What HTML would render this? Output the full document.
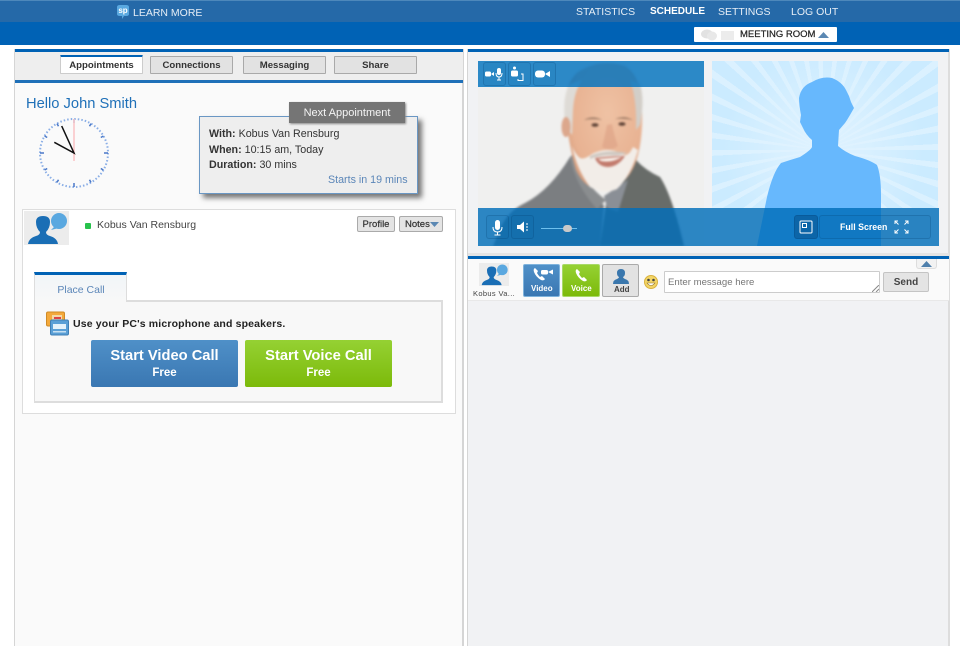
<!DOCTYPE html>
<html><head><meta charset="utf-8">
<style>
html,body{margin:0;padding:0;background:#fff}
body{position:relative;width:960px;height:646px;overflow:hidden;font-family:"Liberation Sans",Arial,sans-serif;color:#333}
.a{position:absolute;box-sizing:border-box}
.t{position:absolute;white-space:nowrap}
.nav{top:5px;font-size:10.500px;line-height:14px;color:#e6eef6}
.tab{position:absolute;box-sizing:border-box;top:56px;height:18px;background:#e2e2e2;border:1px solid #a9a9a9;border-radius:1px;font-size:9.600px;font-weight:bold;line-height:17px;text-align:center;color:#333}
.ib{position:absolute;box-sizing:border-box;background:rgba(0,70,130,.05);border:1px solid rgba(0,60,110,.22);border-radius:3px}
.b{font-weight:bold}
.btn{position:absolute;border-radius:2px;color:#fff;text-align:center;font-weight:bold}
.sm{position:absolute;box-sizing:border-box;top:216px;height:16px;background:#e4e4e4;border:1px solid #aaa;border-radius:2px;font-size:9.500px;line-height:15px;text-align:center;color:#333;-webkit-text-stroke:.2px #333}
</style></head><body>

<!-- Top bars -->
<div class="a" style="left:0;top:0;width:960px;height:22px;background:#2569a8;border-top:1px solid #4d88bb"></div>
<div class="a" style="left:0;top:22px;width:960px;height:23px;background:#0062b5"></div>
<svg class="a" style="left:115px;top:4px" width="16" height="16" viewBox="0 0 16 16"><path d="M2 3q0-2 3-2h6q3 0 3 2v7q0 2-3 2H9l-2 3v-3H5q-3 0-3-2z" fill="#5aa9e0"/><text x="8" y="9" font-size="8" font-weight="bold" fill="#fff" text-anchor="middle" font-family="Liberation Sans">sp</text></svg>
<div class="t nav" style="left:133px;top:6px">LEARN MORE</div>
<div class="t nav" style="left:576px">STATISTICS</div>
<div class="t nav b" style="left:650px;font-size:10px;color:#fff">SCHEDULE</div>
<div class="t nav" style="left:718px">SETTINGS</div>
<div class="t nav" style="left:791px">LOG OUT</div>

<div class="a" style="left:694px;top:27px;width:143px;height:15px;background:#fff;border-radius:1px"></div>
<svg class="a" style="left:700px;top:28px" width="38" height="14"><ellipse cx="7" cy="6" rx="6" ry="4.500" fill="#e2e2e2"/><ellipse cx="12" cy="8" rx="5" ry="4.500" fill="#e8e8e8"/><rect x="21" y="3" width="13" height="9" fill="#ececec"/></svg>
<div class="t" style="left:740px;top:28px;font-size:9.500px;line-height:14px;color:#222;-webkit-text-stroke:.2px #222">MEETING ROOM</div>
<svg class="a" style="left:818px;top:31px" width="11" height="8"><path d="M0 7L5.500 1 11 7z" fill="#5b88b3"/></svg>

<!-- Left panel -->
<div class="a" style="left:14px;top:49px;width:450px;height:597px;background:#fafafa;border-left:1px solid #d5d5d5;border-right:2px solid #d5d5d5"></div>
<div class="a" style="left:15px;top:49px;width:448px;height:3px;background:#0062b5"></div>
<div class="a" style="left:15px;top:52px;width:448px;height:28px;background:#eee"></div>
<div class="a" style="left:15px;top:80px;width:448px;height:3px;background:#1f70b8"></div>

<div class="tab" style="left:60px;top:55px;width:83px;height:19px;background:#fff;border:1px solid #ccc;border-top:2px solid #0062b5">Appointments</div>
<div class="tab" style="left:150px;width:83px">Connections</div>
<div class="tab" style="left:243px;width:83px">Messaging</div>
<div class="tab" style="left:334px;width:83px">Share</div>

<div class="t" style="left:26px;top:95px;font-size:14.700px;line-height:18px;color:#1f70b8">Hello John Smith</div>

<!-- Clock -->
<svg class="a" style="left:30px;top:109px" width="88" height="88" viewBox="30 109 88 88">
<circle cx="74" cy="153" r="34" fill="none" stroke="#8aaee6" stroke-width="2" stroke-dasharray="1.500 2.060"/>
<g stroke="#4a78c8" stroke-width="1.500">
<path d="M74 119v4M74 187v-4M40 153h4M108 153h-4"/>
<path d="M91 123.600l-1.500 2.600M103.400 136l-2.600 1.500M103.400 170l-2.600-1.500M91 182.400l-1.500-2.600M57 182.400l1.500-2.600M44.600 170l2.600-1.500M44.600 136l2.600 1.500M57 123.600l1.500 2.600"/>
</g>
<path d="M74 119V161" stroke="#fbc6c8" stroke-width="1.600"/>
<path d="M54.300 142.300L74 153L61.700 126" stroke="#111" stroke-width="1.500" fill="none"/>
</svg>

<!-- Appointment box -->
<div class="a" style="left:199px;top:116px;width:219px;height:78px;background:#eee;border:1px solid #6a97c4;box-shadow:4px 4px 5px #777"></div>
<div class="t" style="left:209px;top:127px;font-size:10.700px;line-height:15.500px;color:#333"><span class="b">With:</span> Kobus Van Rensburg<br><span class="b">When:</span> 10:15 am, Today<br><span class="b">Duration:</span> 30 mins</div>
<div class="t" style="left:328px;top:173px;font-size:10.700px;line-height:15px;color:#5b86b8">Starts in 19 mins</div>
<div class="a" style="left:289px;top:102px;width:116px;height:21px;background:#757575;box-shadow:1px 1px 2px #888;color:#f5f5f5;font-size:11px;line-height:23px;text-align:center">Next Appointment</div>

<!-- Contact card -->
<div class="a" style="left:22px;top:209px;width:434px;height:205px;background:#fff;border:1px solid #ddd"></div>
<div class="a" style="left:24px;top:211px;width:45px;height:34px;background:#ececec"></div>
<svg class="a" style="left:24px;top:211px" width="45" height="34" viewBox="0 0 45 34">
<path d="M4 33Q5 27 12 25Q16 24 16 21Q12 17 12 11Q12 5 19 5Q26 5 26 11Q26 17 22 21Q22 24 26 25Q33 27 34 33z" fill="#1a6eb5"/>
<circle cx="35" cy="10" r="8" fill="#5aa8e0"/><path d="M31 15L27 19L35 17z" fill="#5aa8e0"/></svg>
<div class="a" style="left:85px;top:223px;width:6px;height:6px;background:#27c24c;border-radius:1px"></div>
<div class="t" style="left:97px;top:218px;font-size:10.500px;line-height:14px;color:#444">Kobus Van Rensburg</div>
<div class="sm" style="left:357px;width:38px">Profile</div>
<div class="sm" style="left:399px;width:44px;text-align:left;padding-left:5px">Notes</div>
<svg class="a" style="left:430px;top:222px" width="10" height="5"><path d="M0 0h9L4.500 5z" fill="#5b88b3"/></svg>

<!-- Place call -->
<div class="a" style="left:34px;top:300px;width:409px;height:103px;background:#f8f8f8;border:1px solid #ddd;border-width:2px 2px 2px 1px"></div>
<div class="a" style="left:34px;top:272px;width:93px;height:30px;background:linear-gradient(#f1f5f8,#f8f8f8);border-top:3px solid #0062b5;border-left:1px solid #ddd;border-right:1px solid #ddd;color:#5b86b8;font-size:10.500px;line-height:30px;text-align:center;padding-left:1px">Place Call</div>
<svg class="a" style="left:46px;top:311px" width="24" height="26"><rect x="0.500" y="1" width="18" height="14" rx="1.500" fill="#f4a93b" stroke="#d08a25"/><rect x="6" y="4" width="10" height="8" fill="#f3d9a8"/><rect x="8" y="6" width="7" height="2" fill="#d44"/><rect x="4.500" y="9" width="18" height="15" rx="1.500" fill="#5a9fd6" stroke="#3f7fb6"/><rect x="7" y="13" width="13" height="5" fill="#e4f1fa"/><rect x="7" y="20" width="13" height="1.500" fill="#c7e0f2"/></svg>
<div class="t b" style="left:73px;top:317px;font-size:10.500px;line-height:14px;color:#222;letter-spacing:.15px">Use your PC's microphone and speakers.</div>
<div class="btn" style="left:91px;top:340px;width:147px;height:47px;background:linear-gradient(#4f90c8,#3a77b2)"><div style="font-size:14.700px;line-height:17px;margin-top:8px">Start Video Call</div><div style="font-size:11.500px;line-height:16px;margin-top:0">Free</div></div>
<div class="btn" style="left:245px;top:340px;width:147px;height:47px;background:linear-gradient(#95d133,#7cba0a)"><div style="font-size:14.700px;line-height:17px;margin-top:8px">Start Voice Call</div><div style="font-size:11.500px;line-height:16px;margin-top:0">Free</div></div>

<!-- Right panel -->
<div class="a" style="left:467px;top:49px;width:483px;height:597px;background:#f1f2f4;border-left:1px solid #d5d5d5;border-right:2px solid #ddd"></div>
<div class="a" style="left:468px;top:49px;width:481px;height:3px;background:#0062b5"></div>
<div class="a" style="left:468px;top:253px;width:481px;height:3px;background:#e4e4e4"></div>

<!-- Photo -->
<svg class="a" style="left:478px;top:61px" width="226" height="185" viewBox="478 61 226 185">
<defs>
<radialGradient id="face" cx=".55" cy=".4" r=".62"><stop offset="0" stop-color="#efc2a4"/><stop offset=".75" stop-color="#e8b292"/><stop offset="1" stop-color="#d59c7c"/></radialGradient>
<filter id="bl" color-interpolation-filters="sRGB"><feGaussianBlur stdDeviation="1.100"/></filter>
</defs>
<rect x="478" y="61" width="226" height="185" fill="#f0f0ef"/>
<g filter="url(#bl)">
<path d="M493 246L502 225Q510 210 525 203Q550 190 570 157Q578 180 600 200L604 206L600 246z" fill="#7b7e81"/>
<path d="M600 246L606 204L636 160Q645 170 660 177Q672 195 684 246z" fill="#686c69"/>
<path d="M570 157Q575 185 597 209L606 200Q585 185 572 155z" fill="#8a8d8f"/>
<path d="M604 196L628 180L618 212L607 208z" fill="#8a8f96"/>
<path d="M566 120Q562 85 578 72Q600 58 625 66Q642 76 642 110Q643 135 638 155Q630 185 605 191Q585 190 576 170Q570 150 566 120z" fill="url(#face)"/>
<path d="M565 125Q562 95 570 84L582 80Q574 92 573 110L572 135z" fill="#dedbd6"/>
<path d="M630 80L640 84Q645 100 640 125L636 130Q637 100 630 80z" fill="#d2cec8"/>
<ellipse cx="566" cy="127" rx="4.500" ry="10" fill="#dca78c"/>
<path d="M572 146Q577 170 590 187Q604 195 617 189Q631 176 638 150L633 147Q628 158 622 154Q608 146 592 154Q584 160 580 158Q575 154 572 146z" fill="#f2ede8"/>
<path d="M595 158Q610 156 625 156Q618 167 607 167Q598 166 595 158z" fill="#c27a6c"/>
<path d="M598 159Q610 158 622 157Q612 163 601 161z" fill="#fbf6f0"/>
<path d="M590 156Q606 149 628 153Q618 156 610 155Q600 155 590 159z" fill="#cec7c0"/>
<path d="M607 125Q604 140 602 147Q610 152 618 146Q614 135 612 124z" fill="#dea487" opacity=".7"/>
<path d="M584 120Q593 115 602 120Q593 118 584 120zM615 119Q624 115 633 120Q624 118 615 119z" fill="#93735f"/>
<ellipse cx="595" cy="125" rx="3.500" ry="1.800" fill="#5c4135"/>
<ellipse cx="622" cy="124" rx="3.500" ry="1.800" fill="#5c4135"/>
</g>
</svg>

<!-- Silhouette video -->
<div class="a" style="left:712px;top:61px;width:226px;height:147px;background:repeating-conic-gradient(from 0deg at 111px 89px,#cbebff 0deg 6deg,#dbf1ff 6deg 9deg)"></div>
<div class="a" style="left:712px;top:61px;width:226px;height:147px;background:radial-gradient(circle at 111px 89px,rgba(225,243,255,.95) 0,rgba(225,243,255,.55) 50px,rgba(225,243,255,0) 100px)"></div>
<svg class="a" style="left:712px;top:61px" width="227" height="185" viewBox="712 61 227 185"><path d="M757 246L767 197Q773 172 781 163Q790 160 800 157Q811 150 812 147L812 140Q806 135 803 128L800 122L801 115Q799 105 799 98Q801 86 812 82Q822 76 832 78Q842 82 846 90L849 96L851 102L854 108L850 115L847 120L845 123L839 130L838 146Q845 152 855 156Q870 160 877 165Q881 175 881 195L881 246z" fill="#67b8fd"/></svg>

<!-- Overlays -->
<div class="a" style="left:478px;top:61px;width:226px;height:26px;background:rgba(0,114,190,.82)"></div>
<div class="a" style="left:478px;top:208px;width:461px;height:38px;background:rgba(0,110,185,.82)"></div>

<div class="ib" style="left:483px;top:62px;width:23px;height:24px"></div>
<div class="ib" style="left:508px;top:62px;width:23px;height:24px"></div>
<div class="ib" style="left:533px;top:62px;width:23px;height:24px"></div>
<svg class="a" style="left:483px;top:62px" width="75" height="24" fill="#fff">
<rect x="2" y="9.500" width="6" height="5" rx="1.500"/><path d="M8 12l3-2v4z"/>
<rect x="14" y="6" width="4" height="7" rx="2"/><path d="M13 11q0 4 3 4t3-4M16 15v3M14 18h4" fill="none" stroke="#fff"/>
<circle cx="31.500" cy="6" r="1.500"/><rect x="28" y="8.500" width="7" height="6" rx="1.500"/><path d="M35 17v1.500h5V12l-2 0" fill="none" stroke="#fff"/>
<rect x="52" y="8.500" width="10" height="7" rx="3"/><path d="M62 12l5-3v6z"/>
</svg>

<div class="ib" style="left:486px;top:215px;width:23px;height:24px"></div>
<div class="ib" style="left:511px;top:215px;width:23px;height:24px"></div>
<svg class="a" style="left:486px;top:215px" width="50" height="24" fill="#fff">
<rect x="9" y="5" width="5" height="10" rx="2.500"/><path d="M7 12q0 5 4.500 5t4.500-5M11.500 17v3M8.500 20h6" fill="none" stroke="#fff"/>
<path d="M31 10h3l4-3.500v11L34 14h-3z"/><path d="M40 9h2M40 12h2M40 15h2" stroke="#fff"/>
</svg>
<div class="a" style="left:541px;top:228px;width:36px;height:1px;background:#6ec0ee"></div>
<div class="a" style="left:563px;top:225px;width:9px;height:7px;background:#c9c9c9;border-radius:4px"></div>

<div class="ib" style="left:794px;top:215px;width:24px;height:24px;background:rgba(0,50,100,.3)"></div>
<svg class="a" style="left:794px;top:215px" width="24" height="24"><rect x="6" y="6" width="12" height="12" rx="1" fill="none" stroke="#fff"/><rect x="8.500" y="8.500" width="4" height="4" fill="none" stroke="#fff"/></svg>
<div class="ib" style="left:819px;top:215px;width:112px;height:24px"></div>
<div class="t b" style="left:840px;top:221px;font-size:8.800px;line-height:12px;color:#fff">Full Screen</div>
<svg class="a" style="left:894px;top:220px" width="15" height="14" fill="none" stroke="#fff"><path d="M1 4V1h3M1 1l3.500 3.500M14 4V1h-3M14 1l-3.500 3.500M1 10v3h3M1 13l3.500-3.500M14 10v3h-3M14 13l-3.500-3.500"/></svg>

<!-- Chat header -->
<div class="a" style="left:468px;top:256px;width:481px;height:3px;background:#0062b5"></div>
<div class="a" style="left:468px;top:259px;width:481px;height:42px;background:#fafafa;border-bottom:1px solid #e8e8e8"></div>
<div class="a" style="left:479px;top:263px;width:30px;height:23px;background:#ececec"></div>
<svg class="a" style="left:479px;top:263px" width="30" height="23" viewBox="0 0 45 34">
<path d="M4 33Q5 27 12 25Q16 24 16 21Q12 17 12 11Q12 5 19 5Q26 5 26 11Q26 17 22 21Q22 24 26 25Q33 27 34 33z" fill="#1a6eb5"/>
<circle cx="35" cy="10" r="8" fill="#5aa8e0"/><path d="M31 15L27 19L35 17z" fill="#5aa8e0"/></svg>
<div class="t" style="left:473px;top:289px;font-size:7.500px;line-height:10px;letter-spacing:.35px;color:#444">Kobus Va...</div>

<div class="a" style="left:523px;top:264px;width:37px;height:33px;background:linear-gradient(#4f90c8,#3a77b2);border:1px solid #7fb3dc;border-radius:2px"></div>
<div class="t b" style="left:531px;top:284px;font-size:8px;line-height:10px;color:#fff">Video</div>
<svg class="a" style="left:533px;top:267px" width="22" height="15" fill="#fff"><path d="M2 1q-2 1-1 4 2 5 7 8 3 1 4-1l-3-3-2 1q-2-2-3-4l1-2z"/><rect x="8" y="3" width="7" height="4.500" rx="1.500"/><path d="M15 5l5-2.500v5z"/></svg>
<div class="a" style="left:562px;top:264px;width:38px;height:33px;background:linear-gradient(#95d133,#7cba0a);border:1px solid #a8d968;border-radius:2px"></div>
<div class="t b" style="left:571px;top:284px;font-size:8px;line-height:10px;color:#fff">Voice</div>
<svg class="a" style="left:575px;top:268px" width="13" height="14" fill="#fff"><path d="M2 1q-2 1-1 4 2 5 7 8 3 1 4-1l-3-3-2 1q-2-2-3-4l1-2z"/></svg>
<div class="a" style="left:602px;top:264px;width:37px;height:33px;background:#e2e2e2;border:1px solid #aaa;border-radius:2px"></div>
<div class="t b" style="left:614px;top:285px;font-size:8px;line-height:10px;color:#444">Add</div>
<svg class="a" style="left:612px;top:268px" width="18" height="16"><path d="M1 16q0-4 4-5 2-1 2-2-2-1-2-4 0-4 4-4t4 4q0 3-2 4 0 1 2 2 4 1 4 5z" fill="#3a77ad"/></svg>
<svg class="a" style="left:644px;top:275px" width="14" height="14"><circle cx="7" cy="7" r="6.500" fill="#f3d566" stroke="#d9b23f"/><circle cx="4.500" cy="5" r="1.300" fill="#444"/><circle cx="9.500" cy="5" r="1.300" fill="#444"/><path d="M3 8q4 5 8 0z" fill="#fff" stroke="#8a6a20" stroke-width=".6"/></svg>

<div class="a" style="left:664px;top:271px;width:216px;height:22px;background:#fff;border:1px solid #ccc;border-radius:1px"></div>
<div class="t" style="left:668px;top:276px;font-size:9.600px;line-height:13px;color:#777">Enter message here</div>
<svg class="a" style="left:872px;top:285px" width="7" height="7" stroke="#888"><path d="M0 7L7 0M4 7L7 4" fill="none"/></svg>
<div class="a" style="left:883px;top:272px;width:46px;height:20px;background:#e4e4e4;border:1px solid #c4c4c4;border-radius:2px;font-size:10px;font-weight:bold;line-height:19px;text-align:center;color:#444">Send</div>
<div class="a" style="left:916px;top:259px;width:21px;height:10px;background:#f2f2f2;border:1px solid #ddd;border-top:0;border-radius:0 0 3px 3px"></div>
<svg class="a" style="left:921px;top:261px" width="11" height="6"><path d="M0 6L5.500 0 11 6z" fill="#4f80ac"/></svg>

</body></html>
